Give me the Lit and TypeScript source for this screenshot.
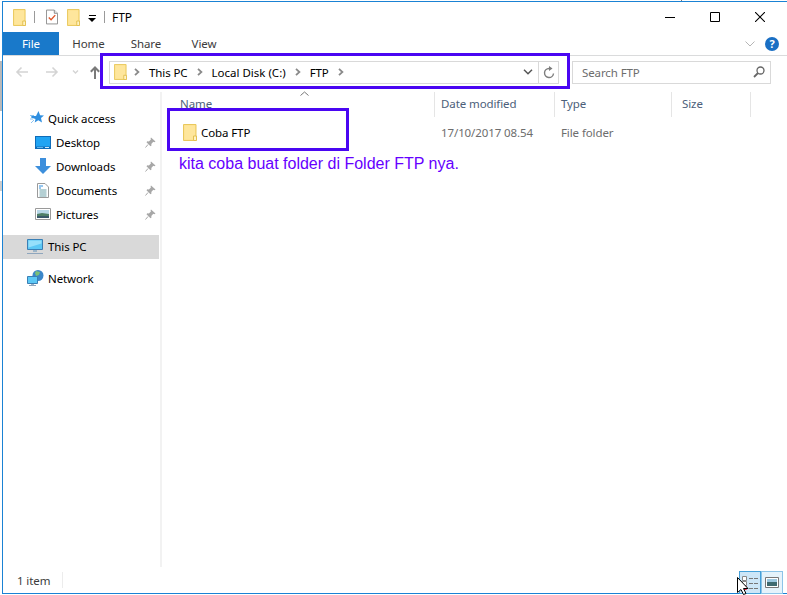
import { LitElement, html, css } from "lit";
import { customElement } from "lit/decorators.js";

const folder = (w = 13, h = 17) => html`<svg class="ic" width=${w} height=${h} viewBox="0 0 14 17" preserveAspectRatio="none">
  <path d="M.5.500h12.500v16H.5z" fill="#fde08a" stroke="#e9c85c"/>
  <path d="M1.500 1.500h10.500v14H1.500z" fill="#fee69c"/>
  <path d="M10.500 12h3v4.500h-3z" fill="#fff3c4" stroke="#e3c050"/>
</svg>`;
const pin = html`<svg class="ic" width="11" height="11" viewBox="0 0 11 11">
  <path d="M6 .5l4.500 4-1.200.7-1-.4-2 2.200.2 1.500-1 .8-4-4 .8-1 1.600.2 2-2.100-.3-1.200z" fill="#a7a7a7"/>
  <path d="M3 7.500L.5 10.500" stroke="#a7a7a7" fill="none"/>
</svg>`;
const chev = html`<svg class="ic" width="6" height="8" viewBox="0 0 6 8"><path d="M1 .8L4.400 4 1 7.200" fill="none" stroke="#8a8a8a" stroke-width="1.800"/></svg>`;

const star = html`<svg class="ic" width="14" height="14" viewBox="0 0 14 14">
  <path d="M8.500 0l1.600 4.200 3.900.2-3 2.700 1 4.400-3.700-2.300-3.600 2.300.8-3.600L1 6.500 1.500 5h4.500z" fill="#2f8fe0"/>
  <path d="M0 4.500h4M0 8h3M1 12l3-3" stroke="#8cc4f0" fill="none"/></svg>`;
const desk = html`<svg class="ic" width="16" height="13" viewBox="0 0 16 13">
  <path d="M0 0h16v13H0z" fill="#0f6cb8"/><path d="M1 1h14v9.500H1z" fill="#20a4f3"/><path d="M10 11.500h4" stroke="#cfe9fb"/><path d="M2 11.500h6" stroke="#5fb4ec"/></svg>`;
const down = html`<svg class="ic" width="16" height="16" viewBox="0 0 16 16"><path d="M5 0h6v8h5l-8 8-8-8h5z" fill="#3d8fdc"/></svg>`;
const doc = html`<svg class="ic" width="12" height="15" viewBox="0 0 12 15">
  <path d="M.5.500h7.500l3.500 3.500v10.500H.5z" fill="#fff" stroke="#9a9a9a"/>
  <path d="M2 3h4M2 5h2" stroke="#2f8fe0"/><path d="M2.500 7h7M2.500 9h7M2.500 11h7M2.500 13h7" stroke="#6aa0a8"/></svg>`;
const pic = html`<svg class="ic" width="16" height="12" viewBox="0 0 16 12">
  <path d="M.5.500h15v11H.5z" fill="#fff" stroke="#9a9a9a"/><path d="M2 2h12v4H2z" fill="#b8d8e8"/>
  <path d="M2 6l5-1 7 1v4H2z" fill="#4f7f68"/><path d="M2 8h12v2H2z" fill="#39596a"/></svg>`;
const pc = html`<svg class="ic" width="16" height="15" viewBox="0 0 16 15">
  <path d="M.5.500h15v10H.5z" fill="#5cc8f5" stroke="#3a7fb5"/><path d="M1.500 1.500h13v3l-13 4z" fill="#96e0fb"/>
  <path d="M6 11h4v2H6z" fill="#9db5c8"/><path d="M0 14.500h16" stroke="#8fa6bd"/></svg>`;
const net = html`<svg class="ic" width="17" height="16" viewBox="0 0 17 16">
  <circle cx="11" cy="5.500" r="5.500" fill="#3b87c9"/><path d="M9 1l4 1-1 3-3 1-1-3z" fill="#7bbf78"/>
  <path d="M.5 6.500h10v7H.5z" fill="#5cc8f5" stroke="#3a7fb5"/><path d="M4 14h3v1H4z" fill="#9db5c8"/><path d="M2 15.500h7" stroke="#8fa6bd"/></svg>`;

const quick = [
  { name: "Desktop", icon: desk },
  { name: "Downloads", icon: down },
  { name: "Documents", icon: doc },
  { name: "Pictures", icon: pic },
];

@customElement("app-root")
export class AppRoot extends LitElement {
  static styles = css`
    :host { display: block; width: 787px; height: 595px; overflow: hidden; position: relative; background: #fff;
      font-family: "Noto Sans", "Open Sans", sans-serif; font-size: 11.5px; letter-spacing: -0.1px; color: #000; }
    * { box-sizing: border-box; }
    .ic { display: block; flex: none; }
    .screen { display: flex; height: 595px; padding-top: 1px; }
    .desktop { width: 2px; flex: none; background: linear-gradient(#fff 0 60px, #b9b9b9 60px 110px, #fff 110px 180px, #ccc 180px 190px, #fff 190px); }
    .win { flex: 1; min-width: 0; height: 593px; border-left: 1px solid #1a82d4; border-top: 1px solid #1a82d4; border-bottom: 1px solid #1a82d4;
      display: flex; flex-direction: column; }
    .title { height: 30px; flex: none; display: flex; align-items: center; padding-left: 10px; }
    .tsep { width: 1px; height: 12px; background: #9a9a9a; flex: none; }
    .qa1 { margin-right: 8px; }
    .qa2 { margin: 0 9px 0 11px; }
    .drop { margin: 0 8px 0 8px; display: flex; flex-direction: column; align-items: center; gap: 2px; padding-top: 2px;}
    .drop i { display: block; width: 7px; height: 1px; background: #000; }
    .drop b { display: block; border: 4px solid transparent; border-top-color: #000; border-bottom: 0; }
    .name { margin-left: 7px; font-size: 12px; flex: 1; }
    .ctrl { display: flex; padding-right: 5px; }
    .ctrl span { width: 45px; height: 30px; display: flex; align-items: center; justify-content: center; }
    .tabs { height: 24px; flex: none; display: flex; align-items: stretch; border-bottom: 1px solid #dadbdc; }
    .tab { width: 58px; display: flex; align-items: center; justify-content: center; color: #3b3b3b; }
    .tab.file { width: 56px; background: #1979ca; color: #fff; height: 23px; }
    .tab.home { padding-left: 1px; }
    .right { margin-left: auto; display: flex; align-items: center; gap: 10px; padding-right: 8px; }
    .help { width: 14px; height: 14px; border-radius: 50%; background: #1a6fc4; color: #fff; font-weight: 700; font-size: 11px; line-height: 14px; text-align: center; }
    .nav { height: 36px; flex: none; display: flex; align-items: center; padding: 0 16px 4px 12px; }
    .arrows { width: 94px; flex: none; display: flex; align-items: center; }
    .addr { width: 450px; flex: none; height: 23px; border: 1px solid #d9d9d9; display: flex; align-items: center; padding-left: 4px; }
    .crumb { display: flex; align-items: center; gap: 9px; flex: 1; }
    .crumb .root { margin-right: -2px; }
    .crumb .wide { letter-spacing: 0; }
    .addr-r { width: 20px; height: 100%; border-left: 1px solid #d9d9d9; display: flex; align-items: center; justify-content: center; }
    .search { margin-left: 13px; width: 199px; height: 23px; border: 1px solid #d9d9d9; display: flex; align-items: center; justify-content: space-between; padding: 0 5px 0 9px; color: #6d6d6d; }
    .main { flex: 1; min-height: 0; display: flex; }
    .side { width: 159px; flex: none; padding-top: 15px; border-right: 2px solid #f2f2f2; }
    .row { height: 24px; padding-bottom: 2px; display: flex; align-items: center; }
    .row.top { padding-left: 24px; gap: 5px; width: 156px; }
    .row.qa { padding-left: 27px; gap: 4px; }
    .row.net { gap: 4px; margin-top: 8px; }
    .row.sub { padding-left: 29px; width: 156px; }
    .slot { width: 21px; flex: none; display: flex; justify-content: center; margin-right: 3px; }
    .row.sel { background: #d9d9d9; margin-top: 8px; }
    .pin { margin-left: auto; margin-right: 3px; }
    .list { flex: 1; min-width: 0; }
    .head { height: 25px; display: grid; grid-template-columns: 273px 120px 117px 79px; position: relative; }
    .head span { padding: 0 0 3px 6px; color: #4c607a; display: flex; align-items: center; border-right: 1px solid #e5e5e5; }
    .head span:first-child { padding-left: 18px; }
    .head span:nth-child(4) { padding-left: 10px; }
    .caret { position: absolute; left: 138px; top: -1px; }
    .file-row { margin-top: 3px; height: 24px; display: grid; grid-template-columns: 273px 120px 200px; align-items: center; }
    .file-row .n { display: flex; align-items: center; gap: 4px; padding-left: 21px; }
    .file-row .m { padding-left: 6px; color: #6d6d6d; }
    .status { height: 26px; flex: none; display: flex; align-items: flex-start; padding: 6px 0 0 14px; color: #3b3b3b; }
    .status .sep { width: 1px; height: 16px; background: #ececec; margin: -1px 0 0 12px; }
    .views { margin-left: auto; margin-right: 4px; display: flex; margin-top: -2px; height: 23px; align-items: stretch; }
    .vb { width: 22px; border: 1px solid #8cc4e8; background: #e5f3fb; display: flex; align-items: center; justify-content: center; }
    .vb.on { background: #cde6f7; border-color: #45a0d8; }
    .mark { position: absolute; border: 3px solid #4a06f2; pointer-events: none; }
    .m1 { left: 100px; top: 53px; width: 470px; height: 36px; }
    .m2 { left: 167px; top: 108px; width: 182px; height: 43px; }
    .note { position: absolute; left: 179px; top: 155px; color: #6600ff; font: 16px "Liberation Sans", Arial, sans-serif; letter-spacing: 0; white-space: nowrap; }
    .cursor { position: absolute; left: 736px; top: 577px; }
    .tick { position: absolute; left: 681px; top: 0; width: 1px; height: 1px; background: #777; }
  `;

  render() {
    return html`
      <div class="screen">
        <div class="desktop"></div>
        <div class="win">
          <div class="title">
            <span class="qa1">${folder()}</span>
            <span class="tsep"></span>
            <span class="qa2"><svg class="ic" width="12" height="16" viewBox="0 0 13 16">
              <path d="M.5.500h8.500l3.500 3.500v11.500H.5z" fill="#fff" stroke="#8a8a8a"/><path d="M9 .5v3.500h3.500" fill="#e8e8e8" stroke="#8a8a8a"/>
              <path d="M3 8.500l2.500 2.500L10 6" fill="none" stroke="#e0562a" stroke-width="1.500"/></svg></span>
            ${folder()}
            <span class="drop"><i></i><b></b></span>
            <span class="tsep"></span>
            <span class="name">FTP</span>
            <div class="ctrl">
              <span><svg width="10" height="10"><path d="M0 5.500h10" stroke="#000"/></svg></span>
              <span><svg width="10" height="10"><path d="M.5.500h9v9h-9z" fill="none" stroke="#000"/></svg></span>
              <span><svg width="10" height="10"><path d="M0 0l10 10M10 0L0 10" stroke="#000" stroke-width="1.100"/></svg></span>
            </div>
          </div>
          <div class="tabs">
            <div class="tab file">File</div>
            <div class="tab home">Home</div>
            <div class="tab">Share</div>
            <div class="tab">View</div>
            <div class="right">
              <svg width="10" height="6"><path d="M.5.500L5 5l4.500-4.500" fill="none" stroke="#b5b5b5"/></svg>
              <span class="help">?</span>
            </div>
          </div>
          <div class="nav">
            <div class="arrows">
              <svg width="75" height="12" viewBox="0 0 75 12" class="ic">
                <path d="M13 6H2M6.500 1.500L2 6l4.500 4.500" fill="none" stroke="#d4d4d4" stroke-width="1.600"/>
                <path d="M31 6h11M37.500 1.500L42 6l-4.500 4.500" fill="none" stroke="#d4d4d4" stroke-width="1.600"/>
                <path d="M58 4.500L60.500 7 63 4.500" fill="none" stroke="#d4d4d4" stroke-width="1.400"/>
              </svg>
              <svg width="10" height="13" viewBox="0 0 10 13" class="ic"><path d="M5 13V2M.8 5.800L5 1.500l4.200 4.300" fill="none" stroke="#7a7a7a" stroke-width="2"/></svg>
            </div>
            <div class="addr">
              <div class="crumb">
                <span class="root">${folder(13, 16)}</span>
                ${chev}<span>This PC</span>${chev}<span class="wide">Local Disk (C:)</span>${chev}<span>FTP</span>${chev}
              </div>
              <svg width="10" height="6" style="margin-right:5px"><path d="M1 .8L5 4.800 9 .8" fill="none" stroke="#555" stroke-width="1.500"/></svg>
              <div class="addr-r"><svg width="12" height="13" viewBox="0 0 12 13"><path d="M10.500 7.500a4.500 4.500 0 1 1-4.500-5h1.500" fill="none" stroke="#7d7d7d" stroke-width="1.400"/><path d="M6 0l3.500 2.500L6 5z" fill="#7d7d7d"/></svg></div>
            </div>
            <div class="search">
              <span>Search FTP</span>
              <svg width="12" height="12" viewBox="0 0 12 12"><circle cx="7.500" cy="4.500" r="3.500" fill="none" stroke="#666" stroke-width="1.300"/><path d="M5 7l-4 4" stroke="#666" stroke-width="1.800"/></svg>
            </div>
          </div>
          <div class="main">
            <div class="side">
              <div class="row top qa">${star}Quick access</div>
              ${quick.map((q) => html`<div class="row sub"><span class="slot">${q.icon}</span>${q.name}<span class="pin">${pin}</span></div>`)}
              <div class="row top sel">${pc}This PC</div>
              <div class="row top net">${net}Network</div>
            </div>
            <div class="list">
              <div class="head">
                <span>Name</span><span>Date modified</span><span>Type</span><span>Size</span>
                <svg class="caret" width="9" height="5"><path d="M.5 4.500L4.500 1l4 3.500" fill="none" stroke="#777"/></svg>
              </div>
              <div class="file-row">
                <div class="n">${folder(14, 17)}<span>Coba FTP</span></div>
                <div class="m">17/10/2017 08.54</div>
                <div class="m">File folder</div>
              </div>
            </div>
          </div>
          <div class="status">
            <span>1 item</span><span class="sep"></span>
            <div class="views">
              <div class="vb on"><svg width="18" height="14" viewBox="0 0 18 14">
                <path d="M1.500 .5h4v4h-4zM1.500 5.500h4v4h-4z" fill="#fff" stroke="#888"/><path d="M1.500 10.500h4v3h-4z" fill="#fff" stroke="#e24"/>
                <path d="M8 2.500h9M8 7.500h9M8 12.500h9" stroke="#777" stroke-dasharray="4 1"/></svg></div>
              <div class="vb"><svg width="14" height="11" viewBox="0 0 14 11"><path d="M.5 .5h13v10H.5z" fill="#fff" stroke="#777"/><path d="M2 2h10v3H2z" fill="#9cc8e0"/><path d="M2 5h10v4H2z" fill="#3f6a70"/></svg></div>
            </div>
          </div>
        </div>
      </div>
      <div class="tick"></div>
      <div class="mark m1"></div>
      <div class="mark m2"></div>
      <div class="note">kita coba buat folder di Folder FTP nya.</div>
      <svg class="cursor" width="13" height="18" viewBox="0 0 13 18"><path d="M1.500 .5v15l3.500-3 2.500 5 2.500-1-2.500-5h4.500z" fill="#fff" stroke="#000"/></svg>
    `;
  }
}
